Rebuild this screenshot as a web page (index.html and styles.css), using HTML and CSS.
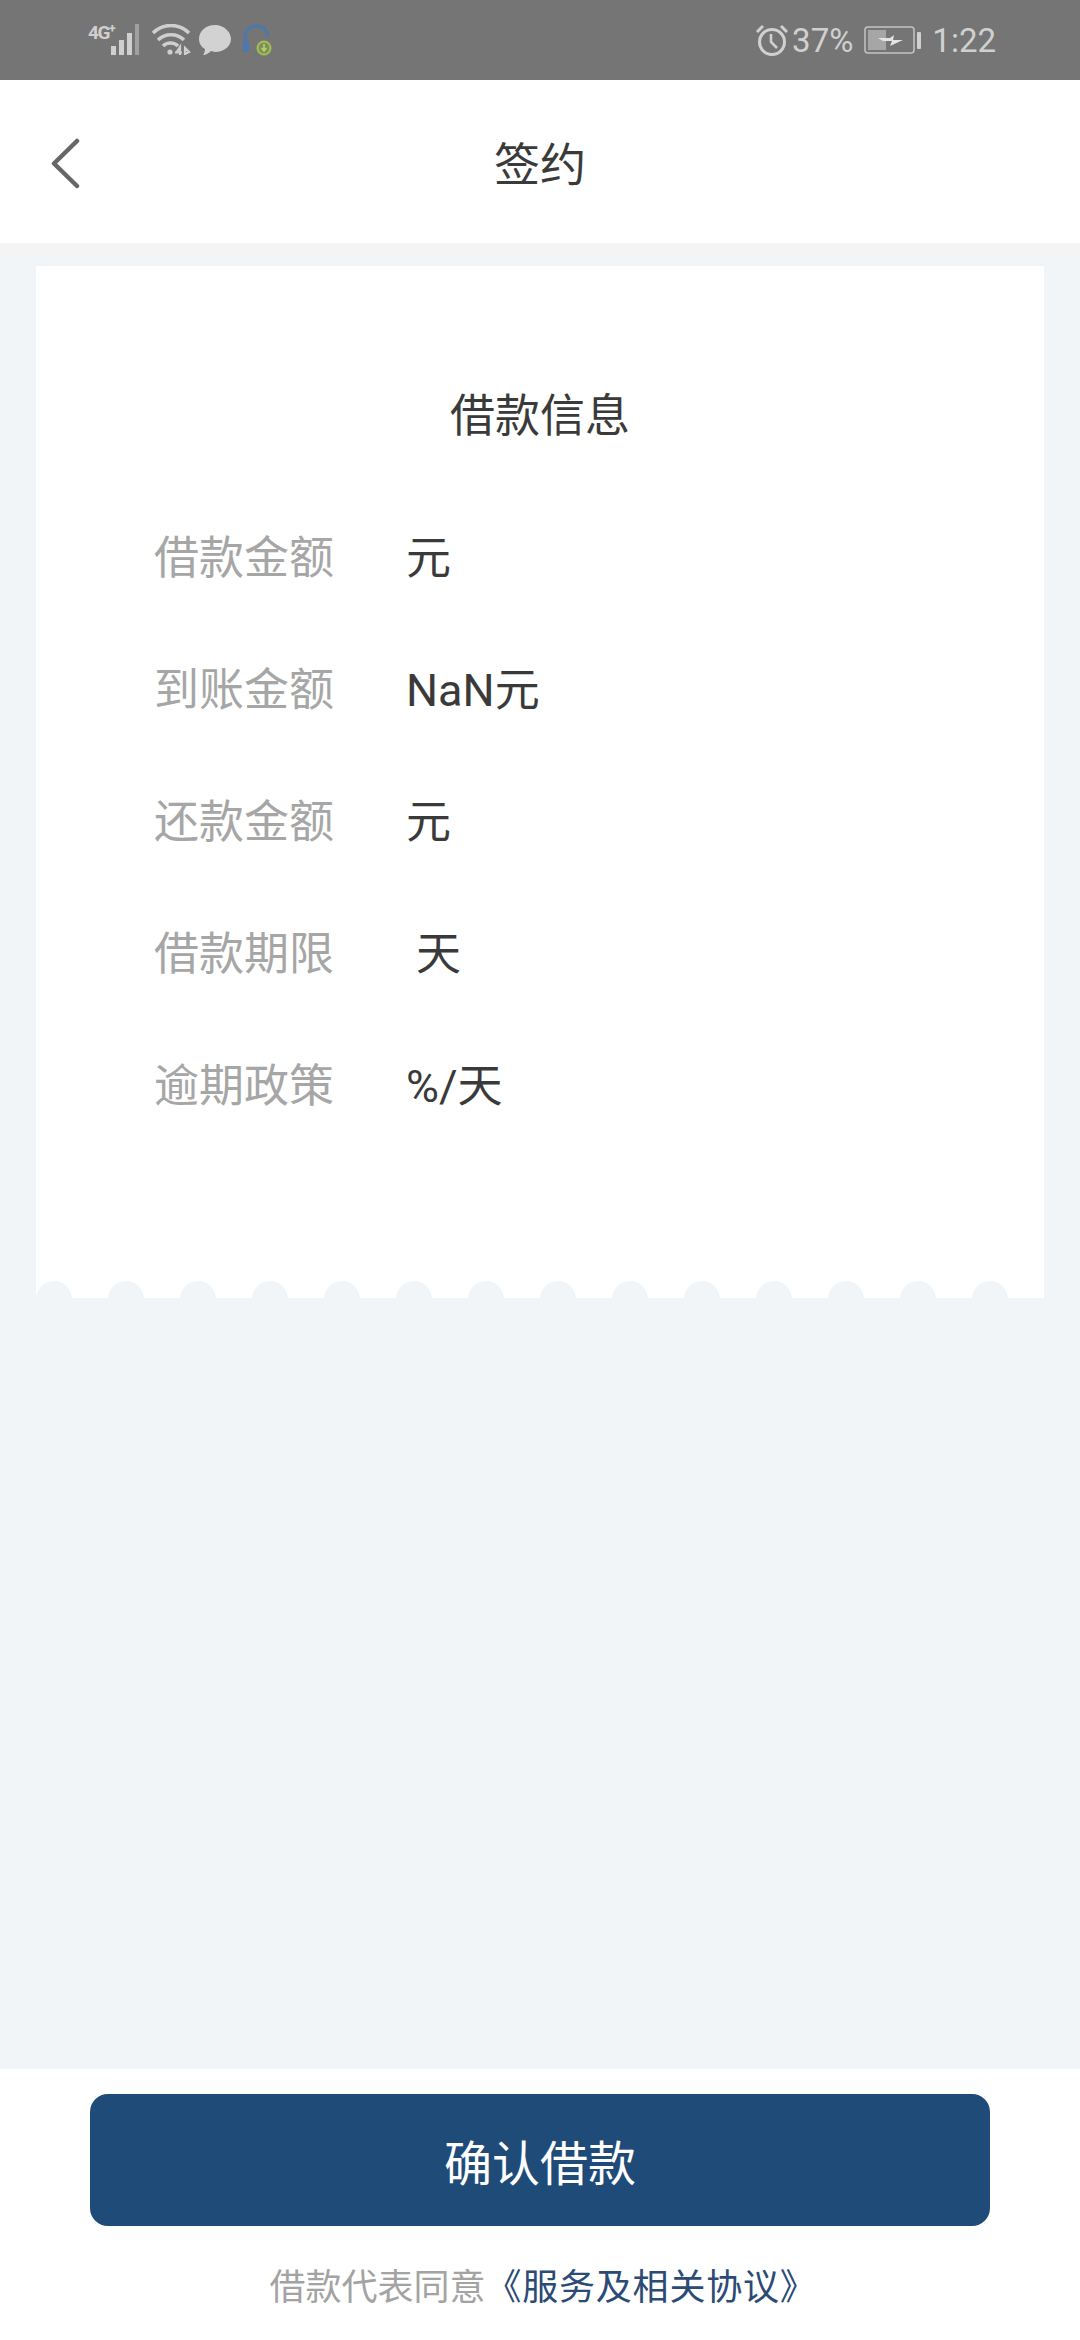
FILE: index.html
```html
<!DOCTYPE html>
<html lang="zh-CN">
<head>
    <meta charset="UTF-8">
    <meta name="viewport" content="width=device-width, initial-scale=1.0">
    <title>签约</title>
    <link rel="stylesheet" href="styles.css">
</head>
<body>
    <div class="page">
        <div class="status">
            <div class="status-left">
                <svg class="ic-signal" width="56" height="44" viewBox="0 -12 56 44">
                    <text x="0" y="15" class="net">4G<tspan class="net-plus" dy="-6">+</tspan></text>
                    <rect x="23" y="22" width="5" height="9" fill="#cfcfcf"/>
                    <rect x="31" y="16" width="5" height="15" fill="#cfcfcf"/>
                    <rect x="39" y="9" width="5" height="22" fill="#cfcfcf"/>
                    <rect x="47" y="0" width="4" height="31" fill="#a0a0a0"/>
                </svg>
                <svg class="ic-wifi" width="40" height="32" viewBox="0 0 40 32" fill="none" stroke="#cfcfcf" stroke-width="3.5">
                    <path d="M1 9C11 -1 27 -1 37 9"/>
                    <path d="M6 16C13 9 25 9 32 16"/>
                    <path d="M11 22C15 18 22 18 26 22"/>
                    <circle cx="18" cy="28" r="2.600" fill="#cfcfcf" stroke="none"/>
                    <path d="M24 29l4-6v8M23 28.500h7M33 31v-7l4 4-4 2" stroke-width="2.200"/>
                </svg>
                <svg class="ic-chat" width="32" height="32" viewBox="0 0 32 32">
                    <path d="M16 1C7 1 0 7 0 15c0 4 2 8 6 10 0 2-1 5-2 6 3 0 6-2 8-4 1 0 3 1 4 1 9 0 16-6 16-13S25 1 16 1z" fill="#d2d2d2"/>
                </svg>
                <svg class="ic-headset" width="32" height="32" viewBox="0 0 32 32" fill="none">
                    <path d="M3 23V13C3 5 9 2 15 2s10 4 11 10" stroke="#4a78b0" stroke-width="3"/>
                    <rect x="1" y="17" width="6" height="11" rx="3" fill="#4a78b0"/>
                    <circle cx="22" cy="24" r="6.500" fill="#7d8f60" stroke="#a3c04f" stroke-width="2"/>
                    <path d="M22 20v6M19.500 24l2.500 3 2.500-3" stroke="#b6d05a" stroke-width="1.600"/>
                </svg>
            </div>
            <div class="status-right">
                <svg class="ic-alarm" width="32" height="32" viewBox="0 0 32 32" fill="none" stroke="#d0d0d0" stroke-width="3">
                    <circle cx="16" cy="18" r="12.500"/>
                    <path d="M15 10v8l6 6" stroke-width="2.600"/>
                    <path d="M1 8l6-6M31 8l-6-6"/>
                </svg>
                <span class="status-text">37%</span>
                <svg class="ic-battery" width="58" height="28" viewBox="0 0 58 28">
                    <rect x="1" y="1" width="49" height="26" rx="3" fill="none" stroke="#c4c4c4" stroke-width="1.500"/>
                    <rect x="4" y="4" width="18" height="20" fill="#a6a6a6"/>
                    <path d="M14 12l12 0 4-3-1 5 10 0-13 6 2-5-9 0z" fill="#e4e4e4"/>
                    <rect x="53" y="6" width="4" height="17" rx="1" fill="#d0d0d0"/>
                </svg>
                <span class="status-text">1:22</span>
            </div>
        </div>

        <div class="header">
            <svg class="back" width="30" height="52" viewBox="0 0 30 52" fill="none">
                <path d="M27 3L4 25.500 27 48" stroke="#666" stroke-width="4.500" stroke-linecap="round" stroke-linejoin="round"/>
            </svg>
            <div class="header-title">签约</div>
        </div>

        <div class="main">
            <div class="card">
                <div class="card-title">借款信息</div>
                <div class="rows">
                    <div class="row"><span class="label">借款金额</span><span class="value">元</span></div>
                    <div class="row"><span class="label">到账金额</span><span class="value">NaN元</span></div>
                    <div class="row"><span class="label">还款金额</span><span class="value">元</span></div>
                    <div class="row"><span class="label">借款期限</span><span class="value value-days">天</span></div>
                    <div class="row"><span class="label">逾期政策</span><span class="value">%/天</span></div>
                </div>
                <div class="scallops">
                    <i></i><i></i><i></i><i></i><i></i><i></i><i></i><i></i><i></i><i></i><i></i><i></i><i></i><i></i>
                </div>
            </div>
        </div>

        <div class="footer">
            <button class="confirm">确认借款</button>
            <div class="agree">借款代表同意<span class="agree-link">《服务及相关协议》</span></div>
        </div>
    </div>
</body>
</html>
```

FILE: styles.css
```css
*{
    margin: 0;
    padding: 0;
    box-sizing: border-box;
}
body{
    font-family: "Roboto", "Noto Sans CJK SC", sans-serif;
    background: #f2f5f8;
}
.page{
    width: 1080px;
    height: 2340px;
    display: flex;
    flex-direction: column;
}

.status{
    height: 80px;
    background: #757575;
    display: flex;
    justify-content: space-between;
    padding: 24px 84px 0 88px;
    flex-shrink: 0;
}
.status-left, .status-right{
    display: flex;
    align-items: flex-start;
}
.ic-signal{
    margin-top: -12px;
}
.ic-wifi{
    margin-left: 8px;
}
.ic-chat{
    margin-left: 7px;
}
.ic-headset{
    margin-left: 11px;
}
.net{
    font-family: "Roboto", sans-serif;
    font-size: 19px;
    font-weight: bold;
    letter-spacing: -1.500px;
    fill: #cfcfcf;
}
.net-plus{
    font-size: 13px;
}
.status-text{
    font-size: 33px;
    line-height: 34px;
    color: #d0d0d0;
}
.ic-alarm{
    margin-right: 4px;
}
.ic-battery{
    margin: 2px 10px 0 11px;
}

.header{
    height: 163px;
    background: #fff;
    display: flex;
    align-items: center;
    justify-content: center;
    position: relative;
    flex-shrink: 0;
}
.back{
    position: absolute;
    left: 50px;
    top: 58px;
}
.header-title{
    font-size: 46px;
    color: #3a3a3a;
    margin-top: -2px;
}

.main{
    flex: 1;
    padding: 23px 36px 0;
    background: linear-gradient(#f4f4f4 12px, #f2f5f8 12px);
}
.card{
    height: 1032px;
    background: #fff;
    display: flex;
    flex-direction: column;
}
.card-title{
    margin-top: 113px;
    height: 76px;
    line-height: 76px;
    text-align: center;
    font-size: 45px;
    color: #3a3a3a;
}
.rows{
    margin-top: 33px;
    padding-left: 118px;
}
.row{
    height: 132px;
    display: flex;
    align-items: center;
    font-size: 45px;
}
.label{
    width: 252px;
    color: #a6a6a6;
}
.value{
    color: #3a3a3a;
}
.value-days{
    margin-left: 10px;
}
.scallops{
    margin-top: auto;
    height: 17px;
    overflow: hidden;
    display: flex;
    gap: 36px;
}
.scallops i{
    width: 36px;
    height: 36px;
    border-radius: 50%;
    background: #f2f5f8;
    flex-shrink: 0;
}

.footer{
    height: 271px;
    background: #fff;
    padding: 25px 90px 0;
    flex-shrink: 0;
}
.confirm{
    display: block;
    width: 900px;
    height: 132px;
    border: none;
    border-radius: 18px;
    background: #1f4b79;
    color: #fff;
    font-family: inherit;
    font-size: 48px;
}
.agree{
    margin-top: 32px;
    padding-left: 6px;
    text-align: center;
    font-size: 36px;
    color: #a3a3a3;
}
.agree-link{
    color: #2b4a74;
    letter-spacing: 0.8px;
}
```
